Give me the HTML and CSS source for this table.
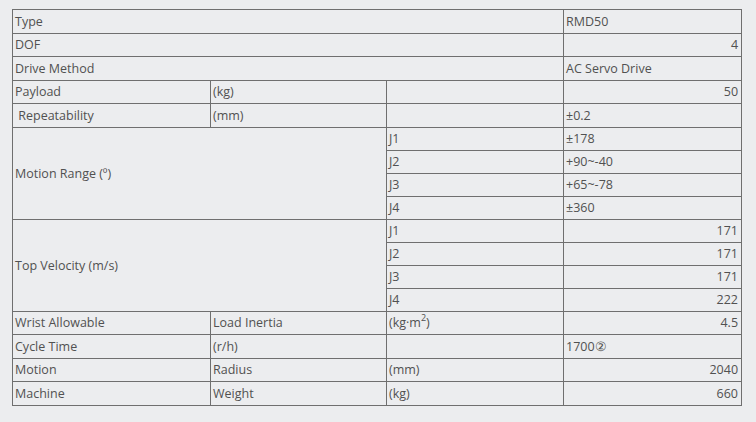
FILE: index.html
```html
<!DOCTYPE html>
<html>
<head>
<meta charset="utf-8">
<link rel="stylesheet" href="styles.css">
</head>
<body>
<div class="wrap">
<table class="spec">
  <colgroup>
    <col class="c1"><col class="c2"><col class="c3"><col class="c4">
  </colgroup>
  <tbody>
    <tr class="r"><td colspan="3">Type</td><td>RMD50</td></tr>
    <tr class="r"><td colspan="3">DOF</td><td class="num">4</td></tr>
    <tr class="r"><td colspan="3">Drive Method</td><td>AC Servo Drive</td></tr>
    <tr class="r"><td>Payload</td><td>(kg)</td><td></td><td class="num">50</td></tr>
    <tr class="r"><td>&nbsp;Repeatability</td><td>(mm)</td><td></td><td>±0.2</td></tr>
    <tr class="j"><td colspan="2" rowspan="4">Motion Range (º)</td><td>J1</td><td>±178</td></tr>
    <tr class="j"><td>J2</td><td>+90~-40</td></tr>
    <tr class="j"><td>J3</td><td>+65~-78</td></tr>
    <tr class="j"><td>J4</td><td>±360</td></tr>
    <tr class="j"><td colspan="2" rowspan="4">Top Velocity (m/s)</td><td>J1</td><td class="num">171</td></tr>
    <tr class="j"><td>J2</td><td class="num">171</td></tr>
    <tr class="j"><td>J3</td><td class="num">171</td></tr>
    <tr class="j"><td>J4</td><td class="num">222</td></tr>
    <tr class="r"><td>Wrist Allowable</td><td>Load Inertia</td><td>(kg·m<sup>2</sup>)</td><td class="num">4.5</td></tr>
    <tr class="r"><td>Cycle Time</td><td>(r/h)</td><td></td><td>1700②</td></tr>
    <tr class="r"><td>Motion</td><td>Radius</td><td>(mm)</td><td class="num">2040</td></tr>
    <tr class="r"><td>Machine</td><td>Weight</td><td>(kg)</td><td class="num">660</td></tr>
  </tbody>
</table>
</div>
</body>
</html>
```
FILE: styles.css
```css
html, body {
  margin: 0;
  padding: 0;
  background: #ecedef;
}
.wrap {
  padding: 9px 0 0 12px;
}
.spec {
  border-collapse: collapse;
  table-layout: fixed;
  width: 729px;
  font-family: "Open Sans", "Noto Sans", sans-serif;
  font-size: 12.5px;
  color: #515151;
}
.c1 { width: 198px; }
.c2 { width: 176px; }
.c3 { width: 177px; }
.c4 { width: 178px; }
.spec td {
  border: 1px solid #6f6f6f;
  padding: 1px 3px 0 2px;
  text-align: left;
  vertical-align: middle;
  white-space: nowrap;
  line-height: 18px;
}
.spec tr.r { height: 23.5px; }
.spec tr.j { height: 23px; }
.spec td.num { text-align: right; }
.spec sup {
  font-size: 9px;
  line-height: 0;
  vertical-align: 6px;
}
```
